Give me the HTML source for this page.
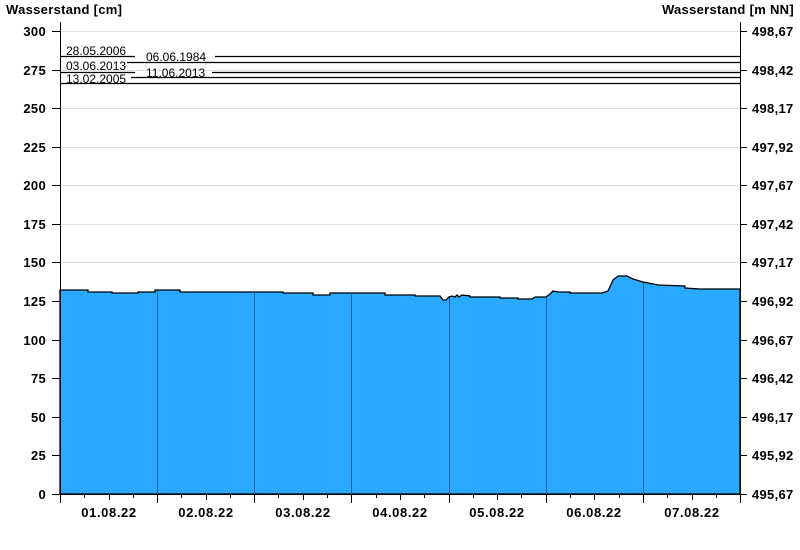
<!DOCTYPE html>
<html><head><meta charset="utf-8"><style>
body{margin:0;background:#fff}
svg{display:block;font-family:"Liberation Sans",Arial,sans-serif}
.b{font-weight:bold;font-size:13px;fill:#000;letter-spacing:0.3px}
.s{font-size:12px;fill:#000}
</style></head><body>
<svg width="800" height="550" viewBox="0 0 800 550">
<text class="b" x="6" y="14">Wasserstand [cm]</text>
<text class="b" x="794" y="14" text-anchor="end">Wasserstand [m NN]</text>
<g stroke="#e0e0e0" stroke-width="1">
<line x1="60" x2="740" y1="31.5" y2="31.5"/>
<line x1="60" x2="740" y1="70.5" y2="70.5"/>
<line x1="60" x2="740" y1="108.5" y2="108.5"/>
<line x1="60" x2="740" y1="147.5" y2="147.5"/>
<line x1="60" x2="740" y1="185.5" y2="185.5"/>
<line x1="60" x2="740" y1="224.5" y2="224.5"/>
<line x1="60" x2="740" y1="262.5" y2="262.5"/>
<line x1="60" x2="740" y1="301.5" y2="301.5"/>
<line x1="60" x2="740" y1="340.5" y2="340.5"/>
<line x1="60" x2="740" y1="378.5" y2="378.5"/>
<line x1="60" x2="740" y1="417.5" y2="417.5"/>
<line x1="60" x2="740" y1="455.5" y2="455.5"/>
</g>
<path fill="#29a9ff" stroke="#000" stroke-width="1.3" d="M60,290 L88,290 L88,292 L112,292 L112,293 L138,293 L138,292 L155,292 L155,290 L180,290 L180,292 L283,292 L283,293 L313,293 L313,295 L330,295 L330,293 L385,293 L385,295 L415,295 L415,296 L440,296 L443,300 L446,300 L449,297 L452,296 L455,297 L457,295 L459,297 L462,295 L470,296 L470,297 L500,297 L500,298 L518,298 L518,299 L532,299 L535,297 L546,297 L550,294 L553,291 L558,292 L570,292 L570,293 L602,293 L608,291 L613,280 L618,276 L627,276 L633,279 L643,282 L658,285 L685,286 L685,288 L700,289 L740,289 L740,494 L60,494 Z"/>
<g stroke="#1f6090" stroke-width="1">
<line x1="157.5" x2="157.5" y1="291" y2="494"/>
<line x1="254.5" x2="254.5" y1="292" y2="494"/>
<line x1="351.5" x2="351.5" y1="293" y2="494"/>
<line x1="449.5" x2="449.5" y1="298" y2="494"/>
<line x1="546.5" x2="546.5" y1="297" y2="494"/>
<line x1="643.5" x2="643.5" y1="283" y2="494"/>
</g>
<g stroke="#000" stroke-width="1.2">
<line x1="60" x2="135" y1="56.5" y2="56.5"/><line x1="215" x2="740" y1="56.5" y2="56.5"/>
<line x1="127" x2="740" y1="62.5" y2="62.5"/>
<line x1="60" x2="135" y1="72.5" y2="72.5"/><line x1="212" x2="740" y1="72.5" y2="72.5"/>
<line x1="131" x2="740" y1="77.5" y2="77.5"/>
<line x1="60" x2="740" y1="83.5" y2="83.5"/>
</g>
<text class="s" x="66" y="55">28.05.2006</text>
<text class="s" x="146" y="61">06.06.1984</text>
<text class="s" x="66" y="70">03.06.2013</text>
<text class="s" x="146" y="77">11.06.2013</text>
<text class="s" x="66" y="83">13.02.2005</text>
<g stroke="#000" stroke-width="1">
<line x1="60.5" x2="60.5" y1="22" y2="494"/>
<line x1="740.5" x2="740.5" y1="22" y2="494"/>
<line x1="60" x2="741" y1="494.5" y2="494.5"/>
</g>
<g class="b" text-anchor="end">
<text x="46" y="36">300</text><text x="46" y="75">275</text><text x="46" y="113">250</text><text x="46" y="152">225</text><text x="46" y="190">200</text><text x="46" y="229">175</text><text x="46" y="267">150</text><text x="46" y="306">125</text><text x="46" y="345">100</text><text x="46" y="383">75</text><text x="46" y="422">50</text><text x="46" y="460">25</text><text x="46" y="499">0</text>
</g>
<g class="b">
<text x="752" y="36">498,67</text><text x="752" y="75">498,42</text><text x="752" y="113">498,17</text><text x="752" y="152">497,92</text><text x="752" y="190">497,67</text><text x="752" y="229">497,42</text><text x="752" y="267">497,17</text><text x="752" y="306">496,92</text><text x="752" y="345">496,67</text><text x="752" y="383">496,42</text><text x="752" y="422">496,17</text><text x="752" y="460">495,92</text><text x="752" y="499">495,67</text>
</g>
<g stroke="#000" stroke-width="1">
<path d="M52,31.5h8M52,70.5h8M52,108.5h8M52,147.5h8M52,185.5h8M52,224.5h8M52,262.5h8M52,301.5h8M52,340.5h8M52,378.5h8M52,417.5h8M52,455.5h8M52,494.5h8"/>
<path d="M740,31.5h7M740,70.5h7M740,108.5h7M740,147.5h7M740,185.5h7M740,224.5h7M740,262.5h7M740,301.5h7M740,340.5h7M740,378.5h7M740,417.5h7M740,455.5h7M740,494.5h7"/>
<path d="M60.5,494v9M157.5,494v9M254.5,494v9M351.5,494v9M449.5,494v9M546.5,494v9M643.5,494v9M740.5,494v9"/>
<path d="M84.5,494v4M109.5,494v6M133.5,494v4M181.5,494v4M206.5,494v6M230.5,494v4M278.5,494v4M303.5,494v6M327.5,494v4M376.5,494v4M400.5,494v6M424.5,494v4M473.5,494v4M497.5,494v6M521.5,494v4M570.5,494v4M594.5,494v6M619.5,494v4M667.5,494v4M692.5,494v6M716.5,494v4"/>
</g>
<g class="b" text-anchor="middle" style="letter-spacing:0.6px">
<text x="109" y="517">01.08.22</text><text x="206" y="517">02.08.22</text><text x="303" y="517">03.08.22</text><text x="400" y="517">04.08.22</text><text x="497" y="517">05.08.22</text><text x="594" y="517">06.08.22</text><text x="692" y="517">07.08.22</text>
</g>
</svg>
</body></html>
